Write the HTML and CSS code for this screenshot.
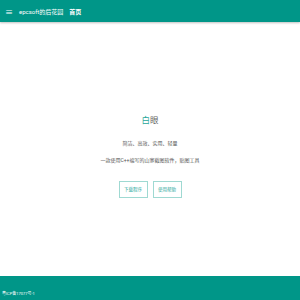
FILE: index.html
```html
<!DOCTYPE html>
<html lang="zh">
<head>
  <meta charset="UTF-8">
  <meta name="viewport" content="width=device-width, initial-scale=1.0">
  <title>白眼 - epcsoft的后花园</title>
  <link rel="stylesheet" href="styles.css">
</head>
<body>

<header class="topbar">
  <span class="menu">≡</span>
  <span class="brand">epcsoft的后花园</span>
  <a class="nav" href="#">首页</a>
</header>

<main class="hero">
  <h1><span class="accent">白</span>眼</h1>
  <p>简洁、高效、实用、轻量</p>
  <p>一款使用C++编写的山寨截图软件，贴图工具</p>
  <div class="actions">
    <a class="btn" href="#">下载程序</a>
    <a class="btn" href="#">使用帮助</a>
  </div>
</main>

<footer class="foot">粤ICP备17077号-1</footer>

</body>
</html>
```

FILE: styles.css
```css
html, body {
  margin: 0;
  padding: 0;
  height: 100%;
}
body {
  font-family: Roboto, "Noto Sans CJK SC", sans-serif;
  background: white;
  display: flex;
  flex-direction: column;
}
.topbar {
  height: 22px;
  background-color: #009688;
  color: white;
  display: flex;
  align-items: center;
  padding: 0 5px;
  font-size: 6px;
  box-shadow: 0 1px 2px rgba(0,0,0,0.25);
}
.menu {
  font-size: 8px;
  width: 14px;
}
.brand {
  font-size: 6px;
  margin-right: 6px;
}
.nav {
  color: white;
  text-decoration: none;
  font-weight: bold;
}
.hero {
  flex: 1;
  text-align: center;
  padding-top: 92px;
  color: #555;
}
.hero h1 {
  margin: 0;
  font-size: 8.5px;
  line-height: 12px;
  font-weight: normal;
  color: #666;
}
.accent {
  color: #26a69a;
}
.hero p {
  margin: 0;
  font-size: 5px;
  line-height: 7px;
}
.hero h1 + p {
  margin-top: 14px;
}
.hero p + p {
  margin-top: 10px;
}
.actions {
  margin-top: 17px;
  display: flex;
  justify-content: center;
  gap: 5px;
}
.btn {
  display: inline-block;
  width: 27px;
  height: 15px;
  line-height: 15px;
  font-size: 4.5px;
  color: #26a69a;
  border: 1px solid #9fd9d2;
  text-decoration: none;
}
.foot {
  height: 24px;
  background-color: #009688;
  color: white;
  font-size: 4px;
  padding: 14px 2px 0;
  box-sizing: border-box;
}
```
